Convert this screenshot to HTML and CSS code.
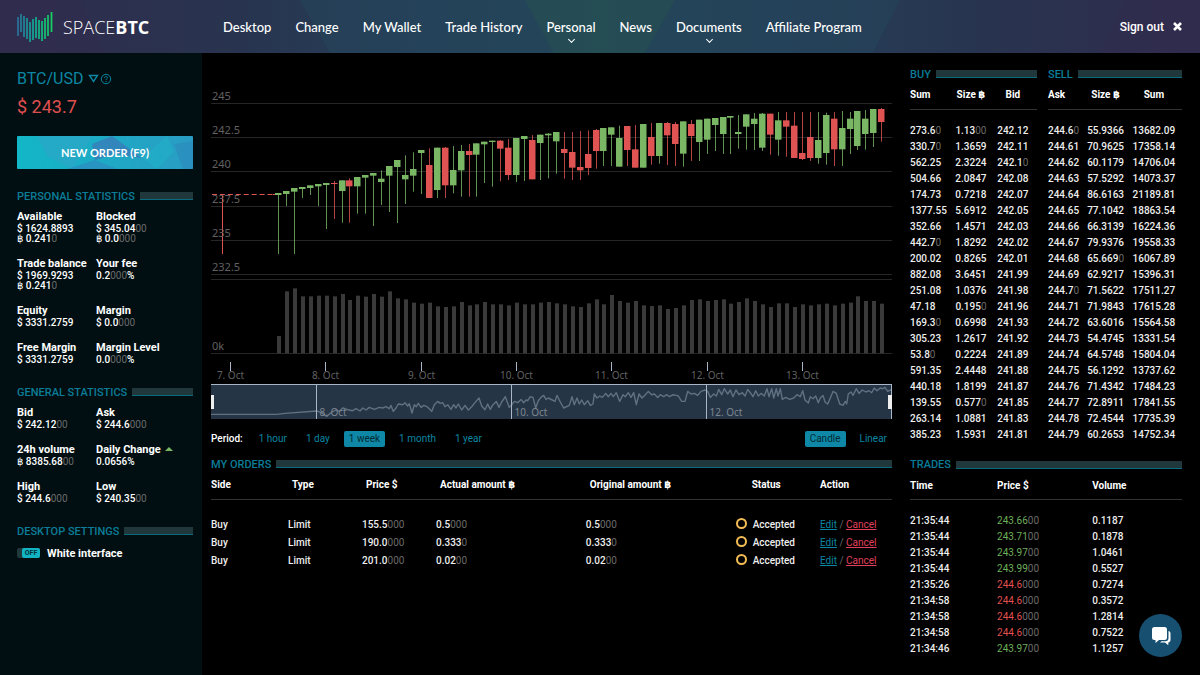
FILE: index.html
```html
<!DOCTYPE html>
<html lang="en">
<head>
    <meta charset="UTF-8">
    <title>SpaceBTC</title>
    <link rel="stylesheet" href="styles.css">
</head>
<body>
    <header class="topbar">
        <svg class="topbar-bg" viewBox="0 0 1200 52" preserveAspectRatio="none" aria-hidden="true">
            <polygon points="0,0 80,0 105,52 0,52" fill="#322b4e" opacity=".5"/>
            <polygon points="300,0 525,0 552,52 330,52" fill="#24455a" opacity=".6"/>
            <polygon points="525,0 675,0 645,52 555,52" fill="#264d54" opacity=".8"/>
            <polygon points="675,0 900,0 873,52 645,52" fill="#24455a" opacity=".6"/>
            <polygon points="1125,0 1200,0 1200,52 1100,52" fill="#322b4e" opacity=".5"/>
        </svg>
        <a class="logo" href="#">
            <svg width="36" height="32" viewBox="0 0 36 32" aria-hidden="true">
                <defs>
                    <linearGradient id="wave" gradientUnits="userSpaceOnUse" x1="0" y1="0" x2="36" y2="0">
                        <stop offset="0" stop-color="#2a6f9c"/>
                        <stop offset=".45" stop-color="#12a898"/>
                        <stop offset="1" stop-color="#14d65c"/>
                    </linearGradient>
                </defs>
                <path fill="none" stroke="url(#wave)" stroke-width="1.7" d="M1 6v19M4 3v18M7 5v21M10 7v21M13 11v20M16 8v21M19 6v21M22 9v19M25 10v20M28 7v21M31 4v21M34.500 1v20"/>
            </svg>
            <span>SPACE<b>BTC</b></span>
        </a>
        <nav class="menu">
            <a href="#">Desktop</a>
            <a href="#">Change</a>
            <a href="#">My Wallet</a>
            <a href="#">Trade History</a>
            <a href="#" class="has-sub">Personal</a>
            <a href="#">News</a>
            <a href="#" class="has-sub">Documents</a>
            <a href="#">Affiliate Program</a>
        </nav>
        <a class="signout" href="#">Sign out
            <svg width="9" height="9" viewBox="0 0 9 9" aria-hidden="true"><path d="M1 1l7 7M8 1l-7 7" stroke="#fff" stroke-width="2.600"/></svg>
        </a>
    </header>

    <main class="desk">
        <aside class="sidebar">
            <h1 class="pair">BTC/USD
                <svg width="24" height="12" viewBox="0 0 24 12" fill="none" stroke="#0b87a3" aria-hidden="true">
                    <path d="M1.500 2.500h8l-4 6z" stroke-width="1.400"/>
                    <circle cx="18" cy="6" r="4.700"/>
                    <path d="M16.500 5c0-2 3-2 3-.3 0 1-1.500 1.100-1.500 2.300M18 8v1"/>
                </svg>
            </h1>
            <div class="price">$ 243.7</div>
            <button class="new-order">
                <svg viewBox="0 0 176 33" preserveAspectRatio="none" aria-hidden="true">
                    <polygon points="20,0 75,0 55,33 30,20" fill="#2ba6c6" opacity=".7"/>
                    <polygon points="75,8 95,0 125,22 100,18 78,24" fill="#3a78b8" opacity=".7"/>
                    <polygon points="50,33 78,24 100,33" fill="#2b8fc0" opacity=".8"/>
                    <polygon points="125,22 150,0 157,16 140,33" fill="#1fb0c8" opacity=".6"/>
                    <polygon points="157,8 176,5 176,33 166,33" fill="#2b8cbe" opacity=".7"/>
                </svg>
                <span>NEW ORDER (F9)</span>
            </button>

            <h2 class="head">PERSONAL STATISTICS</h2>
            <dl class="stats">
                <div><dt>Available</dt><dd>$ 1624.8893</dd><dd>฿ 0.241<i>0</i></dd></div>
                <div><dt>Blocked</dt><dd>$ 345.04<i>00</i></dd><dd>฿ 0.0<i>000</i></dd></div>
                <div><dt>Trade balance</dt><dd>$ 1969.9293</dd><dd>฿ 0.241<i>0</i></dd></div>
                <div><dt>Your fee</dt><dd>0.2<i>000</i>%</dd></div>
                <div><dt>Equity</dt><dd>$ 3331.2759</dd></div>
                <div><dt>Margin</dt><dd>$ 0.0<i>000</i></dd></div>
                <div><dt>Free Margin</dt><dd>$ 3331.2759</dd></div>
                <div><dt>Margin Level</dt><dd>0.0<i>000</i>%</dd></div>
            </dl>

            <h2 class="head">GENERAL STATISTICS</h2>
            <dl class="stats">
                <div><dt>Bid</dt><dd>$ 242.12<i>00</i></dd></div>
                <div><dt>Ask</dt><dd>$ 244.6<i>000</i></dd></div>
                <div><dt>24h volume</dt><dd>฿ 8385.68<i>00</i></dd></div>
                <div><dt class="up">Daily Change</dt><dd>0.0656%</dd></div>
                <div><dt>High</dt><dd>$ 244.6<i>000</i></dd></div>
                <div><dt>Low</dt><dd>$ 240.35<i>00</i></dd></div>
            </dl>

            <h2 class="head">DESKTOP SETTINGS</h2>
            <label class="switch">
                <input type="checkbox">
                <span class="track"><span class="knob">OFF</span></span>
                White interface
            </label>
        </aside>

        <section class="center">
            <svg id="chart" class="chart" viewBox="0 0 681 335" role="img" aria-label="BTC/USD price chart"></svg>
            <div class="periods">
                <span class="label">Period:</span>
                <button>1 hour</button>
                <button>1 day</button>
                <button class="active">1 week</button>
                <button>1 month</button>
                <button>1 year</button>
                <button class="active push">Candle</button>
                <button>Linear</button>
            </div>

            <h2 class="head">MY ORDERS</h2>
            <table class="orders">
                <thead>
                    <tr><th>Side</th><th class="in">Type</th><th class="in">Price $</th><th class="in">Actual amount ฿</th><th class="in">Original amount ฿</th><th class="status">Status</th><th>Action</th></tr>
                </thead>
                <tbody id="orders"></tbody>
            </table>
        </section>

        <section class="market">
            <div class="book">
                <div>
                    <h2 class="head">BUY</h2>
                    <table class="buy">
                        <thead><tr><th>Sum</th><th>Size ฿</th><th>Bid</th></tr></thead>
                        <tbody id="buy"></tbody>
                    </table>
                </div>
                <div>
                    <h2 class="head">SELL</h2>
                    <table class="sell">
                        <thead><tr><th>Ask</th><th>Size ฿</th><th>Sum</th></tr></thead>
                        <tbody id="sell"></tbody>
                    </table>
                </div>
            </div>
            <h2 class="head">TRADES</h2>
            <table class="trades">
                <thead><tr><th>Time</th><th>Price $</th><th>Volume</th></tr></thead>
                <tbody id="trades"></tbody>
            </table>
        </section>
    </main>

    <button class="chat" aria-label="Chat">
        <svg width="20" height="20" viewBox="0 0 20 20" aria-hidden="true">
            <path fill="#fff" d="M3.500 1h10A2.500 2.500 0 0 1 16 3.500v8a2.500 2.500 0 0 1-2.500 2.500H8l-3.500 3v-3h-1A2.500 2.500 0 0 1 1 11.500v-8A2.500 2.500 0 0 1 3.500 1z"/>
            <path fill="#fff" d="M17.500 5c1.200.3 2 1.200 2 2.500v6.500c0 1.300-1 2.300-2.200 2.500v2.800L14 16.500H9l1.500-1.300h4c1.700 0 3-1.300 3-3z"/>
        </svg>
    </button>

    <script src="script.js"></script>
</body>
</html>
```
FILE: styles.css
```css
* { box-sizing: border-box; }
body { margin: 0; min-height: 100vh; display: flex; flex-direction: column; background: #000; color: #fff; font-family: Roboto, "DejaVu Sans", sans-serif; font-size: 10px; font-weight: 500; }
h1, h2, dl, dd { margin: 0; }
a { color: inherit; text-decoration: none; }
button { border: none; background: none; padding: 0; font: inherit; color: inherit; cursor: pointer; }
i { font-style: normal; font-weight: 400; color: #6a6a6a; }

/* top bar */
.topbar {
    position: relative; display: flex; align-items: center; height: 53px; padding: 0 18px 0 17px;
    background: linear-gradient(90deg, #2f2c4d 0%, #28344f 20%, #25405a 36%, #254a56 50%, #25405a 64%, #28344f 82%, #2f2c4d 100%);
}
.topbar-bg { position: absolute; top: 0; left: 0; width: 100%; height: 100%; }
.logo { position: relative; display: flex; align-items: center; gap: 10px; width: 206px; font-family: "Open Sans", sans-serif; font-size: 18px; font-weight: 300; }
.logo b { font-weight: 700; }
.menu { position: relative; display: flex; gap: 24px; font-family: Lato, sans-serif; font-size: 13px; font-weight: 500; white-space: nowrap; }
.menu a { position: relative; }
.has-sub::after {
    content: ""; position: absolute; left: 50%; bottom: -7px; width: 4px; height: 4px; margin-left: -2px;
    border: solid #fff; border-width: 0 1px 1px 0; transform: rotate(45deg);
}
.signout { position: relative; display: flex; align-items: center; gap: 9px; margin-left: auto; font-size: 12px; font-weight: 500; }

/* layout */
.desk { flex: 1; display: grid; grid-template-columns: 202px 1fr 272px; padding-right: 18px; }
.sidebar { padding: 16px 9px 0 17px; background: #010f12; }
.center { min-width: 0; padding: 32px 18px 0 9px; }
.market { padding-top: 14px; }

.head { display: flex; align-items: center; gap: 5px; height: 14px; font-size: 11px; font-weight: 500; color: #0b7d98; white-space: nowrap; }
.head::after { content: ""; flex: 1; height: 7px; background: #20373c; border-bottom: 1px solid #0a6a7e; }

/* sidebar */
.pair { display: flex; align-items: center; gap: 5px; height: 19px; font-size: 16px; font-weight: 400; color: #0b87a3; }
.price { height: 20px; margin-top: 9px; font-size: 18px; line-height: 20px; font-weight: 400; color: #e04f50; }
.new-order { position: relative; display: block; width: 100%; height: 33px; margin: 19px 0 20px; border-radius: 1px; background: linear-gradient(90deg, #12b7c6, #2a9cc4); font-family: Lato, sans-serif; font-size: 11px; font-weight: 700; overflow: hidden; }
.new-order svg { position: absolute; top: 0; left: 0; width: 100%; height: 100%; }
.new-order span { position: relative; }
.stats { display: grid; grid-template-columns: 79px 1fr; row-gap: 13px; margin: 7px 0 20px; white-space: nowrap; }
.stats dt { line-height: 14px; font-size: 11px; font-weight: 700; }
.stats dd { line-height: 10px; height: 10px; }
.up::after { content: ""; display: inline-block; margin: 0 0 2px 4px; border: 4px solid transparent; border-top: 0; border-bottom-color: #79b765; }
.switch { display: flex; align-items: center; height: 14px; margin-top: 8px; font-size: 11px; font-weight: 700; }
.switch input { position: absolute; opacity: 0; }
.track { display: flex; width: 23px; height: 10px; margin-right: 7px; padding-left: 5px; border-radius: 2px; background: #20373c; }
.knob { flex: 1; border-radius: 2px; background: #12b3c2; color: #01343c; font-size: 7px; line-height: 10px; text-align: center; }

/* chart */
.chart { display: block; width: 100%; font-family: "Noto Sans", sans-serif; font-weight: 400; }
.grid { stroke: #262626; }
.tick { stroke: #aab6c6; }
.green { fill: #79b765; stroke: #79b765; }
.red { fill: #e05353; stroke: #e05353; }
.axis { font-size: 11px; fill: #606060; }
.date { font-size: 10px; fill: #606060; }
.nav-date { font-size: 10px; fill: #7d8590; }
.periods { display: flex; gap: 9px; height: 16px; margin: 11px 0 10px; line-height: 16px; font-weight: 400; }
.periods .label { margin-right: 2px; font-weight: 500; }
.periods button { padding: 0 5px; border-radius: 2px; color: #0b87a3; }
.periods .active { background: #0e88a6; color: #012a33; }
.periods .push { margin-left: auto; }

/* tables */
table { width: 100%; border-collapse: collapse; table-layout: fixed; white-space: nowrap; }
th, td { padding: 0; text-align: left; }
th { height: 28px; border-bottom: 1px solid #333; font-weight: 700; }
td { height: 16px; line-height: 16px; color: #eee; }
tbody tr:first-child td { height: 29px; padding-top: 13px; }
.book { display: grid; grid-template-columns: 127px 1fr; column-gap: 11px; margin-bottom: 15px; }
.buy th:nth-child(1) { width: 34%; }
.buy th:nth-child(2) { width: 28%; }
.sell th:nth-child(1) { width: 28%; }
.sell th:nth-child(2) { width: 30%; }
.book th:nth-child(n+2), .book td:nth-child(n+2) { text-align: center; }
.trades th:nth-child(1) { width: 32%; }
.trades th:nth-child(2) { width: 35%; }
.rise { color: #6fae5c; font-weight: 400; }
.fall { color: #e04f50; font-weight: 400; }

.orders th:nth-child(1) { width: 77px; }
.orders th:nth-child(2), .orders th:nth-child(3) { width: 74px; }
.orders th:nth-child(4), .orders th:nth-child(5) { width: 22%; }
.orders th:nth-child(7) { width: 72px; }
.orders td { height: 18px; line-height: 18px; }
.orders tbody tr:first-child td { height: 34px; padding-top: 16px; }
.orders .in { padding-left: 4px; }
.orders .status { padding-left: 16px; }
.dot { display: inline-block; width: 11px; height: 11px; margin-right: 6px; border: 2px solid #f3bd55; border-radius: 50%; vertical-align: -1px; }
.edit, .cancel { font-weight: 400; text-decoration: underline; }
.edit { color: #0b87a3; }
.cancel { color: #e0405c; }

.chat { position: fixed; right: 18px; bottom: 18px; display: flex; align-items: center; justify-content: center; width: 43px; height: 43px; border-radius: 50%; background: #174f70; }
```
FILE: script.js
```js
// digits after "|" are insignificant zeros and are dimmed
function num(s) {
    const [a, b] = s.split('|');
    return b ? `${a}<i>${b}</i>` : a;
}

function fill(id, rows, cell) {
    document.getElementById(id).innerHTML = rows.map(r => `<tr>${cell(r)}</tr>`).join('');
}

const cells = r => r.split(' ').map(v => `<td>${num(v)}</td>`).join('');

fill('buy', [
    '273.6|0 1.13|00 242.12', '330.7|0 1.3659 242.11', '562.25 2.3224 242.1|0', '504.66 2.0847 242.08',
    '174.73 0.7218 242.07', '1377.55 5.6912 242.05', '352.66 1.4571 242.03', '442.7|0 1.8292 242.02',
    '200.02 0.8265 242.01', '882.08 3.6451 241.99', '251.08 1.0376 241.98', '47.18 0.195|0 241.96',
    '169.3|0 0.6998 241.93', '305.23 1.2617 241.92', '53.8|0 0.2224 241.89', '591.35 2.4448 241.88',
    '440.18 1.8199 241.87', '139.55 0.577|0 241.85', '263.14 1.0881 241.83', '385.23 1.5931 241.81'
], cells);

fill('sell', [
    '244.6|0 55.9366 13682.09', '244.61 70.9625 17358.14', '244.62 60.1179 14706.04', '244.63 57.5292 14073.37',
    '244.64 86.6163 21189.81', '244.65 77.1042 18863.54', '244.66 66.3139 16224.36', '244.67 79.9376 19558.33',
    '244.68 65.669|0 16067.89', '244.69 62.9217 15396.31', '244.7|0 71.5622 17511.27', '244.71 71.9843 17615.28',
    '244.72 63.6016 15564.58', '244.73 54.4745 13331.54', '244.74 64.5748 15804.04', '244.75 56.1292 13737.62',
    '244.76 71.4342 17484.23', '244.77 72.8911 17841.55', '244.78 72.4544 17735.39', '244.79 60.2653 14752.34'
], cells);

fill('trades', [
    ['21:35:44', '243.66|00', '0.1187', 'rise'],
    ['21:35:44', '243.71|00', '0.1878', 'rise'],
    ['21:35:44', '243.97|00', '1.0461', 'rise'],
    ['21:35:44', '243.99|00', '0.5527', 'rise'],
    ['21:35:26', '244.6|000', '0.7274', 'fall'],
    ['21:34:58', '244.6|000', '0.3572', 'fall'],
    ['21:34:58', '244.6|000', '1.2814', 'fall'],
    ['21:34:58', '244.6|000', '0.7522', 'fall'],
    ['21:34:46', '243.97|00', '1.1257', 'rise']
], r => `<td>${r[0]}</td><td class="${r[3]}">${num(r[1])}</td><td>${r[2]}</td>`);

fill('orders', [
    ['155.5|000', '0.5|000'],
    ['190.0|000', '0.333|0'],
    ['201.0|000', '0.02|00']
], r => `<td>Buy</td><td>Limit</td><td>${num(r[0])}</td><td>${num(r[1])}</td><td>${num(r[1])}</td>
    <td><span class="dot"></span>Accepted</td>
    <td><a class="edit" href="#">Edit</a> <i>/</i> <a class="cancel" href="#">Cancel</a></td>`);

// candles: colour, body top, body bottom, high, low (3 units per pixel)
const candles = `g324,330,324,507 g318,327,318,363 g309,320,309,507 g306,312,306,339 g301,309,301,330 g297,304,297,363
g294,300,294,432 r294,297,288,402 g286,318,286,413 r286,304,280,413 g276,304,276,386 g270,278,270,386 g264,272,264,423
g281,291,256,360 g243,272,243,381 g225,246,225,414 g270,283,211,357 g252,272,202,320 g195,204,195,327 r240,339,190,339
g188,315,188,339 r188,301,186,339 g255,301,183,325 g198,256,180,335 r198,210,177,335 g175,209,175,335 g170,178,170,294
g167,171,167,305 r167,191,165,289 r188,270,162,285 g159,270,159,291 g153,162,153,288 r165,283,150,283 g149,174,149,285
g146,151,144,280 g141,169,141,266 r192,204,141,281 r201,248,141,285 r246,256,138,285 r207,249,136,270 r135,198,132,251
g129,198,129,243 g127,149,127,243 g159,245,122,245 r123,195,123,243 r193,248,120,248 g117,248,117,248 r156,213,114,239
g114,213,114,236 r114,151,111,240 r117,177,111,243 g109,206,109,245 r117,153,105,228 g104,171,104,228 g101,164,101,207
g99,120,99,198 g96,147,96,207 g93,98,93,207 g141,147,90,191 g88,125,88,194 g101,117,84,195 g86,188,84,198
r86,149,86,209 g106,164,81,212 r106,125,81,215 r122,219,81,219 r204,222,81,225 r156,219,81,228 g165,219,81,236
g90,204,83,239 r101,193,81,243 g129,193,78,243 g101,132,81,207 g78,183,78,195 g101,147,75,194 g72,144,72,186 r72,111,69,170`.split(/\s+/);

// volume: distance of each bar top from the pane's top
const volume = [198, 64, 55, 79, 79, 77, 77, 79, 72, 90, 77, 80, 72, 80, 64, 85, 88, 98, 101, 98, 109, 111, 109, 96, 106, 103,
    96, 103, 103, 106, 98, 103, 103, 98, 96, 100, 103, 109, 111, 100, 88, 103, 75, 93, 98, 93, 106, 108, 106, 117, 114, 106,
    90, 88, 93, 90, 88, 101, 96, 85, 93, 103, 111, 100, 100, 111, 103, 106, 103, 101, 106, 101, 98, 79, 93, 93, 101];

// navigator line, x,y pairs
const navigator_ = `0,89 197,89 222,86 317,79 330,83 347,95 360,84 375,76 385,80 395,70 410,75 425,78 435,72 447,79 455,70
465,76 475,68 490,74 505,68 515,70 525,66 535,72 540,62 547,80 555,70 562,58 575,60 582,54 590,64 595,57 603,85 610,60
616,66 622,56 630,68 638,62 648,66 655,72 662,80 670,60 680,50 688,56 695,54 702,66 710,60 720,74 728,60 735,70 742,58
752,76 762,62 772,76 782,66 790,56 804,40 812,64 822,75 830,58 838,74 846,60 856,50 864,68 872,52 883,36 895,68 902,60
910,50 920,54 930,44 938,54 945,46 950,48 958,36 966,38 974,70 982,48 990,38 998,32 1005,44 1012,40 1024,46 1032,50
1038,32 1048,52 1058,70 1075,62 1083,36 1090,60 1098,40 1105,58 1112,46 1120,60 1130,48 1138,62 1146,58 1150,28 1158,40
1166,34 1174,38 1184,26 1192,36 1200,26 1207,36 1216,24 1226,50 1236,30 1243,36 1252,24 1260,38 1268,24 1276,60 1284,28
1293,40 1303,30 1312,20 1322,30 1330,28 1340,38 1348,30 1358,36 1366,30 1376,36 1386,30 1396,32 1402,34 1412,50 1422,50
1430,20 1440,28 1450,26 1460,32 1470,20 1482,16 1490,20 1498,38 1508,28 1516,34 1523,14 1532,30 1540,12 1550,28 1558,16
1566,36 1575,16 1584,30 1594,24 1602,34 1610,14 1618,24 1626,36 1634,18 1642,34 1650,26 1660,34 1668,12 1674,36 1682,12
1688,40 1696,12 1701,34 1708,12 1714,44 1724,38 1736,44 1748,40 1758,30 1768,36 1775,18 1782,46 1792,55 1798,36 1806,42
1814,34 1822,54 1828,40 1836,32 1842,52 1850,58 1858,40 1866,20 1876,26 1886,58 1896,62 1903,50 1907,58 1912,28 1920,22
1926,32 1936,12 1944,26 1954,16 1964,22 1974,18 1982,24 1990,10 1998,18 2008,10 2016,12 2022,8 2030,20 2042,14`.split(/\s+/);

function drawChart() {
    const step = 7.938;
    const line = (cls, x1, y1, x2, y2) => `<line class="${cls}" x1="${x1}" y1="${y1}" x2="${x2}" y2="${y2}"/>`;
    const text = (cls, x, y, s, anchor = 'start') => `<text class="${cls}" x="${x}" y="${y}" text-anchor="${anchor}">${s}</text>`;
    let svg = '';

    [18.5, 52.5, 86.5, 121.5, 155.5, 189.5, 194.5, 268.5].forEach(y => svg += line('grid', 0, y, 681, y));

    // flat start of the series
    for (let x = 0; x < 64; x += step) svg += line('red', x + 1, 109.5, Math.min(x + 6, 62), 109.5);
    svg += line('red', 11.5, 109, 11.5, 169);

    candles.forEach((c, i) => {
        const [top, bottom, high, low] = c.slice(1).split(',').map(v => v / 3);
        const x = 67 + i * step;
        const cls = c[0] === 'g' ? 'green' : 'red';
        svg += `<g class="${cls}"><rect x="${Math.round(x)}" y="${high}" width="1" height="${low - high}" stroke="none" opacity=".8"/>`;
        svg += `<rect x="${Math.round(x) - 3}" y="${top}" width="6.5" height="${Math.max(bottom - top, 1)}" stroke="none"/></g>`;
    });

    volume.forEach((v, i) => {
        svg += `<rect x="${Math.round(66 + i * step)}" y="${185 + v / 3}" width="4" height="${(250 - v) / 3}" fill="#3a3a3a"/>`;
    });

    ['245', '242.5', '240', '237.5', '235', '232.5'].forEach((s, i) => svg += text('axis', 1, Math.round(15 + i * 34.200), s));
    svg += text('axis', 1, 265, '0k');

    for (let day = 7; day <= 13; day++) {
        const x = Math.round(19 + (day - 7) * 95.3) + 0.5;
        svg += line('tick', x, 277, x, 286) + text('date', x, 294, `${day}. Oct`, 'middle');
    }

    svg += '<rect x="0" y="299" width="681" height="35" fill="#263546"/>' + line('tick', 0, 299.5, 681, 299.5);
    const pts = navigator_.map(p => p.split(',').map(Number)).map(([x, y]) => `${(x / 3).toFixed(1)},${(299.7 + y / 3).toFixed(1)}`);
    svg += `<polyline points="${pts.join(' ')}" fill="none" stroke="#5f7182" stroke-width="1.4" stroke-linejoin="round"/>`;
    [[105.5, '8. Oct'], [300.5, '10. Oct'], [495.5, '12. Oct']].forEach(([x, s]) => {
        svg += line('tick', x, 300, x, 334) + text('nav-date', x + 3, 331, s);
    });
    svg += line('tick', 680.5, 299, 680.5, 334);
    svg += '<rect x="0" y="310" width="3" height="14" fill="#eee"/><rect x="677" y="310" width="4" height="14" fill="#eee"/>';
    document.getElementById('chart').innerHTML = svg;
}

drawChart();
```
